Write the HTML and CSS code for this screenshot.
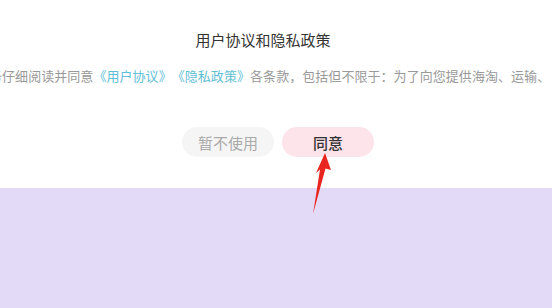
FILE: index.html
```html
<!DOCTYPE html>
<html lang="zh-CN">
<head>
  <meta charset="UTF-8" />
  <meta name="viewport" content="width=device-width, initial-scale=1" />
  <title>用户协议和隐私政策</title>
  <link rel="stylesheet" href="styles.css">
</head>
<body>

<div class="dialog">
  <h2 class="title">用户协议和隐私政策</h2>
  <p class="content">务仔细阅读并同意<a href="#">《用户协议》</a><a href="#">《隐私政策》</a>各条款，包括但不限于：为了向您提供海淘、运输、</p>
  <div class="actions">
    <button class="btn btn-cancel">暂不使用</button>
    <button class="btn btn-ok">同意</button>
  </div>
</div>

<div class="backdrop"></div>

<!-- 标注箭头 -->
<svg class="arrow" width="552" height="308" viewBox="0 0 552 308">
  <polygon points="325,153 331,170 325.5,168.5 313,214 320,169.5 316,173" fill="#e8261f" />
</svg>

</body>
</html>
```

FILE: styles.css
```css
body {
  margin: 0;
  background-color: #fff;
  font-family: "Noto Sans CJK SC", "Noto Sans", sans-serif;
  overflow: hidden;
}

.dialog {
  height: 188px;
  background-color: #fff;
  overflow: hidden;
}

.title {
  margin: 0;
  padding: 30px 26px 0 0;
  font-size: 15px;
  line-height: 20px;
  font-weight: 400;
  color: #333;
  text-align: center;
}

.content {
  margin: 16px 0 0 -11px;
  font-size: 13px;
  line-height: 20px;
  letter-spacing: 0.05px;
  color: #999;
  white-space: nowrap;
  text-spacing-trim: space-all;
  font-feature-settings: "fwid" 1;
}

.content a {
  color: #62bed6;
  text-decoration: none;
}

.actions {
  display: flex;
  justify-content: center;
  gap: 8px;
  margin-top: 41px;
  padding-left: 4px;
}

.btn {
  width: 92px;
  height: 30px;
  border: none;
  border-radius: 15px;
  font-family: inherit;
  font-size: 15px;
  padding: 0;
  cursor: pointer;
}

.btn-cancel {
  background-color: #f5f5f5;
  color: #aaa;
}

.btn-ok {
  background-color: #fde3ea;
  color: #333;
  font-weight: 500;
}

.backdrop {
  height: 120px;
  background-color: #e3daf8;
}

.arrow {
  position: absolute;
  top: 0;
  left: 0;
  pointer-events: none;
}
```
